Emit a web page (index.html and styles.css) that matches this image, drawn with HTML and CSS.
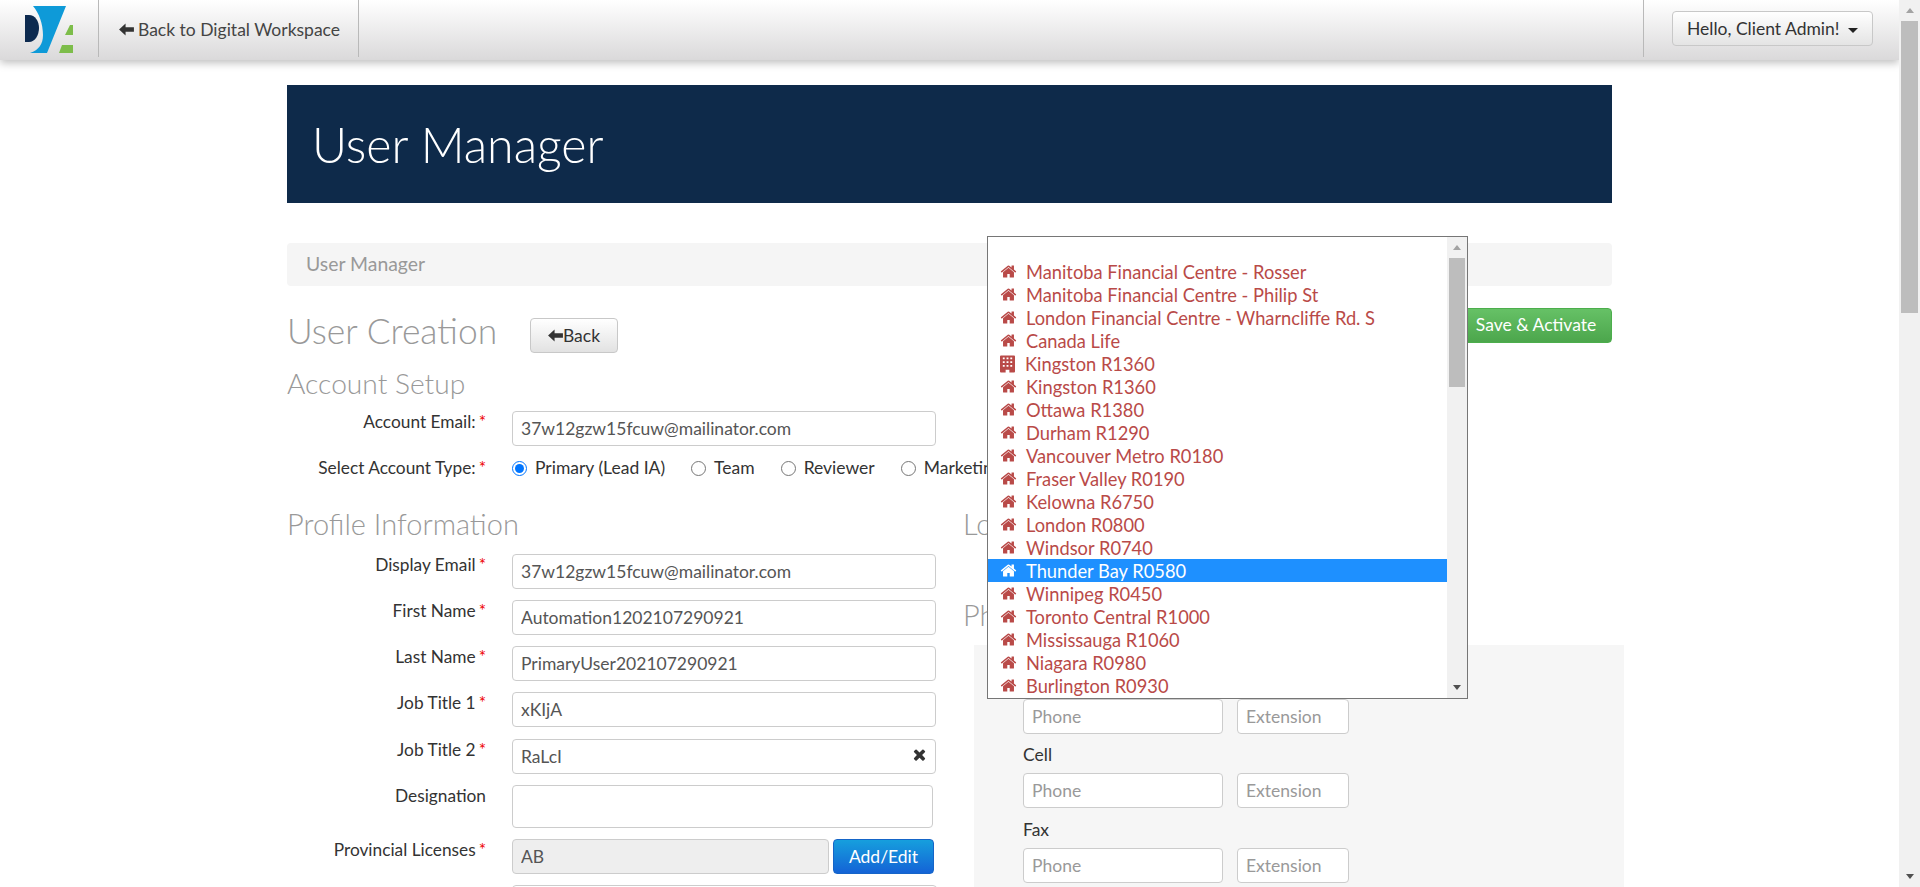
FILE: index.html
```html
<!DOCTYPE html>
<html lang="en">
  <head>
    <meta charset="utf-8" />
    <meta name="viewport" content="width=device-width, initial-scale=1.0" />
    <title>User Manager</title>
    <link rel="stylesheet" href="styles.css">
  </head>
  <body>
    <svg class="sprites" aria-hidden="true">
      <symbol id="i-home" viewBox="0 0 1792 1792">
        <path d="M1472 992v480q0 26-19 45t-45 19h-384v-384h-256v384h-384q-26 0-45-19t-19-45v-480q0-1 .5-3t.5-3l575-474 575 474q1 2 1 6zm223-69l-62 74q-8 9-21 11h-3q-13 0-21-7l-692-577-692 577q-12 8-24 7-13-2-21-11l-62-74q-8-10-7-23.5t11-21.5l719-599q32-26 76-26t76 26l244 204v-195q0-14 9-23t23-9h192q14 0 23 9t9 23v408l219 182q10 8 11 21.5t-7 23.5z"/>
      </symbol>
      <symbol id="i-building" viewBox="0 0 16 18">
        <path fill-rule="evenodd" d="M1 0h14a1 1 0 0 1 1 1v16a1 1 0 0 1-1 1H10v-3H6v3H1a1 1 0 0 1-1-1V1a1 1 0 0 1 1-1zM3 2v2h2V2zm4 0v2h2V2zm4 0v2h2V2zM3 6v2h2V6zm4 0v2h2V6zm4 0v2h2V6zM3 10v2h2v-2zm4 0v2h2v-2zm4 0v2h2v-2z"/>
      </symbol>
      <symbol id="i-arrow" viewBox="0 0 16 14">
        <path d="M0 7 7 .5v4h9v5H7v4z"/>
      </symbol>
      <symbol id="i-times" viewBox="0 0 1792 1792">
        <path d="M1490 1322q0 40-28 68l-136 136q-28 28-68 28t-68-28l-294-294-294 294q-28 28-68 28t-68-28l-136-136q-28-28-28-68t28-68l294-294-294-294q-28-28-28-68t28-68l136-136q28-28 68-28t68 28l294 294 294-294q28-28 68-28t68 28l136 136q28 28 28 68t-28 68l-294 294 294 294q28 28 28 68z"/>
      </symbol>
    </svg>

    <div class="window">
      <div class="page">
        <nav class="navbar">
          <a class="brand" href="#">
            <svg class="logo" viewBox="0 0 48 47">
              <path fill="#0e9ad8" d="M8 0h33L22 47H5c9-3 13-9 13-18 0-11-4-22-10-29z"/>
              <path fill="#0d2a4f" d="M0 9h4c6 0 10 6 10 13s-4 14-10 14H0z"/>
              <path fill="#7dbd4a" d="M45 19h3v10h-8zM37 39h11v8H34z"/>
            </svg>
          </a>
          <a class="nav-link" href="#">
            <svg class="icon"><use href="#i-arrow"/></svg>
            Back to Digital Workspace
          </a>
          <div class="nav-user">
            <button class="user-btn" type="button">Hello, Client Admin! <span class="caret"></span></button>
          </div>
        </nav>

        <main class="content">
          <header class="hero"><h1>User Manager</h1></header>
          <div class="breadcrumb">User Manager</div>

          <div class="title-row">
            <div class="title-group">
              <h2 class="page-title">User Creation</h2>
              <button class="btn back-btn" type="button">
                <svg class="icon"><use href="#i-arrow"/></svg>Back
              </button>
            </div>
            <button class="btn save-btn" type="button">Save &amp; Activate</button>
          </div>

          <h3 class="section-title setup-title">Account Setup</h3>
          <div class="field">
            <label class="field-label">Account Email:<span class="req">*</span></label>
            <input class="input" type="text" value="37w12gzw15fcuw@mailinator.com" />
          </div>
          <div class="field type-row">
            <label class="field-label">Select Account Type:<span class="req">*</span></label>
            <div class="radios">
              <label class="radio"><input type="radio" name="type" checked />Primary (Lead IA)</label>
              <label class="radio"><input type="radio" name="type" />Team</label>
              <label class="radio"><input type="radio" name="type" />Reviewer</label>
              <label class="radio"><input type="radio" name="type" />Marketing</label>
            </div>
          </div>

          <div class="columns">
            <section class="col-left">
              <h3 class="section-title">Profile Information</h3>
              <div class="field">
                <label class="field-label">Display Email<span class="req">*</span></label>
                <input class="input" type="text" value="37w12gzw15fcuw@mailinator.com" />
              </div>
              <div class="field">
                <label class="field-label">First Name<span class="req">*</span></label>
                <input class="input" type="text" value="Automation1202107290921" />
              </div>
              <div class="field">
                <label class="field-label">Last Name<span class="req">*</span></label>
                <input class="input" type="text" value="PrimaryUser202107290921" />
              </div>
              <div class="field job-one">
                <label class="field-label">Job Title 1<span class="req">*</span></label>
                <input class="input" type="text" value="xKIjA" />
              </div>
              <div class="field">
                <label class="field-label">Job Title 2<span class="req">*</span></label>
                <div class="clearable">
                  <input class="input" type="text" value="RaLcI" />
                  <svg class="clear-icon"><use href="#i-times"/></svg>
                </div>
              </div>
              <div class="field">
                <label class="field-label">Designation</label>
                <textarea class="input textarea"></textarea>
              </div>
              <div class="field">
                <label class="field-label">Provincial Licenses<span class="req">*</span></label>
                <div class="license-row">
                  <input class="input readonly" type="text" value="AB" readonly />
                  <button class="btn add-btn" type="button">Add/Edit</button>
                </div>
              </div>
              <div class="field">
                <span></span>
                <input class="input last-input" type="text" />
              </div>
            </section>

            <section class="col-right">
              <h3 class="section-title location-title">Location</h3>
              <h3 class="section-title">Phone</h3>
              <div class="phone-panel">
                <div class="phone-row">
                  <input class="input phone" type="text" placeholder="Phone" />
                  <input class="input ext" type="text" placeholder="Extension" />
                </div>
                <div class="phone-label">Cell</div>
                <div class="phone-row">
                  <input class="input phone" type="text" placeholder="Phone" />
                  <input class="input ext" type="text" placeholder="Extension" />
                </div>
                <div class="phone-label fax-label">Fax</div>
                <div class="phone-row">
                  <input class="input phone" type="text" placeholder="Phone" />
                  <input class="input ext" type="text" placeholder="Extension" />
                </div>
              </div>
            </section>
          </div>
        </main>

        <div class="dropdown">
          <ul class="options">
            <li><svg class="opt-icon"><use href="#i-home"/></svg>Manitoba Financial Centre - Rosser</li>
            <li><svg class="opt-icon"><use href="#i-home"/></svg>Manitoba Financial Centre - Philip St</li>
            <li><svg class="opt-icon"><use href="#i-home"/></svg>London Financial Centre - Wharncliffe Rd. S</li>
            <li><svg class="opt-icon"><use href="#i-home"/></svg>Canada Life</li>
            <li class="office"><svg class="opt-icon"><use href="#i-building"/></svg>Kingston R1360</li>
            <li><svg class="opt-icon"><use href="#i-home"/></svg>Kingston R1360</li>
            <li><svg class="opt-icon"><use href="#i-home"/></svg>Ottawa R1380</li>
            <li><svg class="opt-icon"><use href="#i-home"/></svg>Durham R1290</li>
            <li><svg class="opt-icon"><use href="#i-home"/></svg>Vancouver Metro R0180</li>
            <li><svg class="opt-icon"><use href="#i-home"/></svg>Fraser Valley R0190</li>
            <li><svg class="opt-icon"><use href="#i-home"/></svg>Kelowna R6750</li>
            <li><svg class="opt-icon"><use href="#i-home"/></svg>London R0800</li>
            <li><svg class="opt-icon"><use href="#i-home"/></svg>Windsor R0740</li>
            <li class="selected"><svg class="opt-icon"><use href="#i-home"/></svg>Thunder Bay R0580</li>
            <li><svg class="opt-icon"><use href="#i-home"/></svg>Winnipeg R0450</li>
            <li><svg class="opt-icon"><use href="#i-home"/></svg>Toronto Central R1000</li>
            <li><svg class="opt-icon"><use href="#i-home"/></svg>Mississauga R1060</li>
            <li><svg class="opt-icon"><use href="#i-home"/></svg>Niagara R0980</li>
            <li><svg class="opt-icon"><use href="#i-home"/></svg>Burlington R0930</li>
          </ul>
          <div class="scrollbar small">
            <span class="arrow up"></span>
            <span class="thumb"></span>
            <span class="arrow down"></span>
          </div>
        </div>
      </div>

      <div class="scrollbar page-scroll">
        <span class="arrow up"></span>
        <span class="thumb"></span>
        <span class="arrow down"></span>
      </div>
    </div>
  </body>
</html>
```

FILE: styles.css
```css
* {
  box-sizing: border-box;
}

html,
body {
  margin: 0;
  height: 100%;
  overflow: hidden;
}

body {
  font-family: Lato, "Liberation Sans", sans-serif;
  font-size: 17.5px;
  line-height: 22px;
  color: #333;
  background: #fff;
}

.sprites {
  display: none;
}

.window {
  display: flex;
  height: 887px;
}

.page {
  position: relative;
  flex: 1;
  min-width: 0;
  overflow: hidden;
}

/* top bar */
.navbar {
  display: flex;
  height: 60px;
  background: linear-gradient(#fff, #dad9da);
  box-shadow: 0 3px 8px rgba(0, 0, 0, 0.25);
}

.brand {
  display: flex;
  width: 99px;
  height: 57px;
  padding: 6px 0 0 25px;
  border-right: 1px solid #b9b9b9;
}

.logo {
  width: 48px;
  height: 47px;
}

.nav-link {
  display: flex;
  align-items: center;
  gap: 4px;
  width: 260px;
  height: 57px;
  padding: 2px 0 0 20px;
  border-right: 1px solid #b9b9b9;
  color: #444;
  text-decoration: none;
}

.icon {
  width: 15px;
  height: 13px;
  fill: #333;
}

.nav-user {
  display: flex;
  align-items: flex-start;
  height: 57px;
  margin-left: auto;
  padding: 11px 26px 0 28px;
  border-left: 1px solid #b9b9b9;
}

.user-btn {
  width: 201px;
  height: 35px;
  padding: 0;
  border: 1px solid #c8c8c8;
  border-radius: 4px;
  background: linear-gradient(#fff, #e4e4e4);
  font: inherit;
  color: #333;
}

.caret {
  display: inline-block;
  margin-left: 4px;
  vertical-align: middle;
  border-top: 5px solid #222;
  border-left: 5px solid transparent;
  border-right: 5px solid transparent;
}

/* page content */
.content {
  width: 1325px;
  margin: 25px 0 0 287px;
}

.hero {
  height: 118px;
  padding: 0 25px;
  background: #0e2a4a;
  color: #fff;
}

.hero h1 {
  margin: 0;
  font-size: 48.3px;
  font-weight: 300;
  line-height: 118px;
}

.breadcrumb {
  height: 43px;
  margin-top: 40px;
  padding: 10px 19px;
  border-radius: 4px;
  background: #f5f5f5;
  font-size: 19.4px;
  color: #999;
}

.title-row {
  display: flex;
  justify-content: space-between;
  align-items: flex-start;
  margin-top: 22px;
}

.title-group {
  display: flex;
  align-items: flex-start;
  gap: 33px;
  margin-top: 10px;
}

.page-title {
  margin: 0;
  width: 210px;
  font-size: 35.4px;
  font-weight: 300;
  line-height: 26px;
  white-space: nowrap;
  color: #999;
}

.section-title {
  margin: 0 0 13px;
  font-size: 29px;
  font-weight: 300;
  line-height: 34px;
  color: #999;
}

.setup-title {
  margin: 13px 0 11px;
  font-size: 28.2px;
}

.btn {
  border-radius: 4px;
  font: inherit;
}

.back-btn {
  display: flex;
  align-items: center;
  justify-content: center;
  width: 88px;
  height: 35px;
  padding: 0;
  border: 1px solid #c8c8c8;
  background: linear-gradient(#fff, #e2e2e2);
  color: #333;
}

.save-btn {
  width: 148px;
  height: 35px;
  padding: 0 4px 2px 0;
  border: 1px solid #4cae4c;
  background: linear-gradient(#66c166, #4ca64c);
  color: #fff;
}

.add-btn {
  width: 101px;
  height: 35px;
  padding: 0;
  border: 1px solid #1565c8;
  background: linear-gradient(#169fdd, #1463d6);
  color: #fff;
}

/* form rows */
.field {
  display: grid;
  grid-template-columns: 199px 424px;
  column-gap: 26px;
  margin-bottom: 11px;
}

.field-label {
  font-size: 17.3px;
  text-align: right;
  color: #333;
}

.req {
  margin-left: 3px;
  color: #e00;
}

.input {
  display: block;
  width: 100%;
  height: 35px;
  padding: 0 8px;
  border: 1px solid #ccc;
  border-radius: 4px;
  background: #fff;
  font: inherit;
  color: #555;
}

.input::placeholder {
  color: #999;
}

.textarea {
  width: 421px;
  height: 43px;
  resize: none;
}

.readonly {
  flex: 1;
  min-width: 0;
  background: #eee;
}

.last-input {
  width: 425px;
}

.type-row {
  margin-bottom: 28px;
}

.radios {
  display: flex;
  white-space: nowrap;
}

.radio {
  display: flex;
  align-items: center;
  margin-right: 26px;
}

.radio input {
  flex: none;
  width: 15px;
  height: 15px;
  margin: 0 8px 0 0;
}

.job-one {
  margin-bottom: 12px;
}

.clearable {
  position: relative;
}

.clear-icon {
  position: absolute;
  top: 7px;
  right: 8px;
  width: 17px;
  height: 17px;
  fill: #333;
}

.license-row {
  display: flex;
  gap: 4px;
  width: 422px;
}

/* two columns */
.columns {
  display: flex;
  gap: 26px;
}

.col-left {
  flex: none;
  width: 650px;
}

.col-right {
  flex: none;
  width: 661px;
}

.location-title {
  margin-bottom: 57px;
}

.phone-panel {
  width: 650px;
  height: 300px;
  margin-left: 11px;
  padding: 54px 0 0 49px;
  background: #f6f6f6;
}

.phone-row {
  display: flex;
  gap: 14px;
}

.phone {
  width: 200px;
}

.ext {
  width: 112px;
}

.phone-label {
  margin: 10px 0 7px;
  color: #333;
}

.fax-label {
  margin-top: 11px;
}

/* open select list */
.dropdown {
  position: absolute;
  top: 236px;
  left: 987px;
  display: flex;
  width: 481px;
  height: 463px;
  border: 1px solid #767676;
  background: #fff;
}

.options {
  flex: 1;
  margin: 0;
  padding: 23px 0 0;
  list-style: none;
  color: #b94a48;
  font-size: 18.3px;
}

.options li {
  display: flex;
  align-items: center;
  height: 23px;
  padding-left: 12px;
  white-space: nowrap;
}

.opt-icon {
  width: 17px;
  height: 17px;
  margin-right: 9px;
  fill: currentColor;
}

.office .opt-icon {
  height: 18px;
  width: 15px;
  margin-right: 10px;
}

.options .selected {
  background: #1e90ff;
  color: #fff;
}

/* scrollbars, drawn since the shot has no native ones */
.scrollbar {
  position: relative;
  flex: none;
  background: #f1f1f1;
}

.page-scroll {
  width: 21px;
}

.small {
  width: 20px;
}

.thumb {
  position: absolute;
  left: 2px;
  right: 2px;
  background: #bdbdbd;
}

.page-scroll .thumb {
  top: 21px;
  height: 292px;
}

.small .thumb {
  top: 21px;
  height: 129px;
}

.arrow {
  position: absolute;
  left: 50%;
  margin-left: -4px;
  border-left: 4px solid transparent;
  border-right: 4px solid transparent;
}

.arrow.up {
  top: 8px;
  border-bottom: 5px solid #a3a3a3;
}

.arrow.down {
  bottom: 8px;
  border-top: 5px solid #505050;
}
```
